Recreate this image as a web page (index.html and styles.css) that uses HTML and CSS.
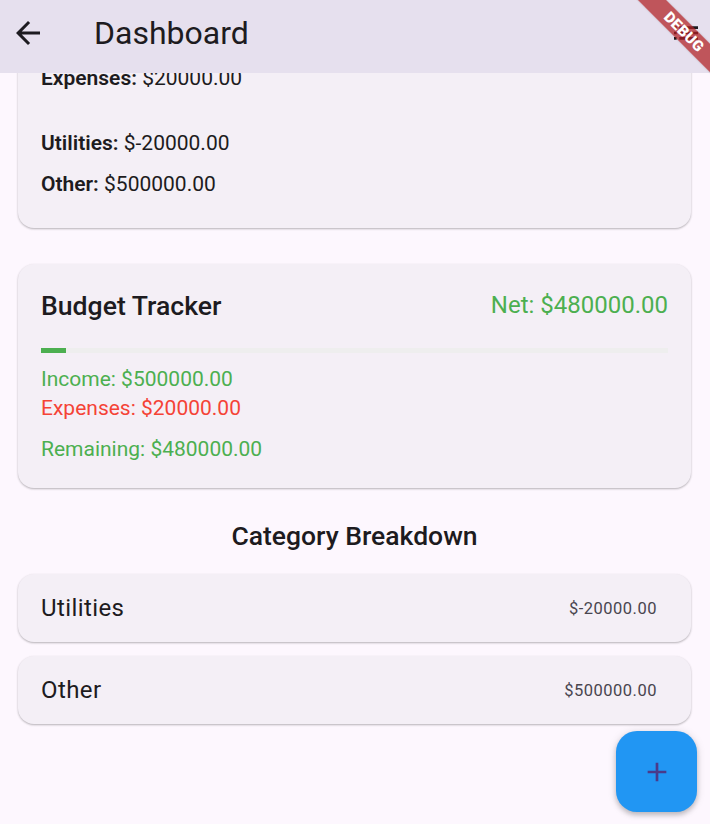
FILE: index.html
```html
<!DOCTYPE html>
<html lang="en">
<head>
<meta charset="utf-8">
<title>Dashboard</title>
<link rel="stylesheet" href="styles.css">
</head>
<body>
<div class="app">
  <header class="appbar">
    <button class="icon-btn back" aria-label="Back">
      <svg viewBox="0 0 24 24" width="36" height="36"><path d="M20 11H7.83l5.59-5.59L12 4l-8 8 8 8 1.41-1.41L7.83 13H20v-2z" fill="#1d1b20"/></svg>
    </button>
    <h1 class="title">Dashboard</h1>
    <button class="icon-btn action" aria-label="List">
      <svg viewBox="0 0 24 24" width="32" height="32"><path d="M3 13h2v-2H3v2zm0 4h2v-2H3v2zm0-8h2V7H3v2zm4 4h14v-2H7v2zm0 4h14v-2H7v2zM7 7v2h14V7H7z" fill="#1d1b20"/></svg>
    </button>
  </header>

  <main class="content">
    <div class="scroll">
      <section class="card summary">
        <p class="row gap-after"><b>Expenses:</b> $20000.00</p>
        <p class="row"><b>Utilities:</b> $-20000.00</p>
        <p class="row"><b>Other:</b> $500000.00</p>
      </section>

      <section class="card budget">
        <div class="budget-head">
          <h2 class="budget-title">Budget Tracker</h2>
          <span class="net">Net: $480000.00</span>
        </div>
        <div class="track"><div class="fill" style="width:4%"></div></div>
        <p class="line green first">Income: $500000.00</p>
        <p class="line red">Expenses: $20000.00</p>
        <p class="line green remaining">Remaining: $480000.00</p>
      </section>

      <h2 class="section-title">Category Breakdown</h2>

      <div class="cat-list">
        <div class="card cat">
          <span class="cat-name">Utilities</span>
          <span class="cat-amt">$-20000.00</span>
        </div>
        <div class="card cat">
          <span class="cat-name">Other</span>
          <span class="cat-amt">$500000.00</span>
        </div>
      </div>
    </div>
  </main>

  <button class="fab" aria-label="Add">
    <svg viewBox="0 0 24 24" width="32" height="32"><path d="M19 13h-6v6h-2v-6H5v-2h6V5h2v6h6v2z" fill="#4a3a8a"/></svg>
  </button>

  <div class="debug-banner"><span>DEBUG</span></div>
</div>
</body>
</html>
```
FILE: styles.css
```css
* { box-sizing: border-box; }
html, body { margin: 0; padding: 0; }
body {
  font-family: Roboto, "Noto Sans", "Liberation Sans", sans-serif;
  background: #fdf7fe;
  color: #1d1b20;
}
.app {
  position: relative;
  width: 710px;
  height: 824px;
  overflow: hidden;
  display: flex;
  flex-direction: column;
}
.appbar {
  position: relative;
  z-index: 2;
  height: 73px;
  flex: none;
  background: #e6e0ee;
  display: flex;
  align-items: center;
  padding-bottom: 7px;
}
.icon-btn {
  border: 0;
  background: none;
  padding: 0;
  display: flex;
  align-items: center;
  justify-content: center;
  width: 40px;
  height: 40px;
}
.back { margin-left: 8px; }
.title {
  margin: 0 0 0 46px;
  font-size: 32px;
  font-weight: 400;
  flex: 1;
  letter-spacing: 0;
  line-height: 40px;
}
.action { margin-right: 4px; }

.content {
  flex: 1;
  overflow: hidden;
  position: relative;
  z-index: 1;
}
.scroll {
  margin-top: -30px;
  padding: 0 19px 0 18px;
  display: flex;
  flex-direction: column;
}
.card {
  background: #f4eff6;
  border-radius: 16px;
  box-shadow: 0 1px 2px rgba(0,0,0,0.22), 0 1px 3px rgba(0,0,0,0.08);
}
.summary {
  padding: 21px 23px 30px;
}
.row {
  margin: 0 0 13px;
  font-size: 21px;
  line-height: 28px;
  height: 28px;
}
.row b { font-weight: 600; }
.row:last-child { margin-bottom: 0; }
.row.gap-after { margin-bottom: 37px; }

.budget {
  margin-top: 36px;
  padding: 21px 23px 24px;
}
.budget-head {
  height: 40px;
  display: flex;
  align-items: center;
  justify-content: space-between;
}
.budget-title {
  margin: 0;
  font-size: 26.6px;
  font-weight: 500;
}
.net {
  font-size: 24px;
  color: #4caf50;
}
.track {
  margin-top: 23px;
  height: 5px;
  background: #eeeeee;
}
.fill {
  height: 100%;
  background: #4caf50;
}
.line {
  margin: 0;
  font-size: 21px;
  line-height: 29px;
}
.line.first { margin-top: 12px; }
.line.remaining { margin-top: 12px; }
.green { color: #4caf50; }
.red { color: #f44336; }

.section-title {
  margin: 31px 0 21px;
  text-align: center;
  font-size: 26.5px;
  font-weight: 500;
  line-height: 34px;
}
.cat-list {
  display: flex;
  flex-direction: column;
  gap: 14px;
}
.cat {
  height: 68px;
  display: flex;
  align-items: center;
  justify-content: space-between;
  padding: 0 34px 0 23px;
}
.cat-name {
  font-size: 24px;
  letter-spacing: 0.4px;
}
.cat-amt {
  font-size: 16.5px;
  color: #49454f;
  letter-spacing: 0.5px;
}

.fab {
  position: absolute;
  right: 13px;
  bottom: 12px;
  width: 81px;
  height: 81px;
  border: 0;
  border-radius: 21px;
  background: #2196f3;
  display: flex;
  align-items: center;
  justify-content: center;
  box-shadow: 0 3px 5px rgba(0,0,0,0.2), 0 1px 10px rgba(0,0,0,0.12);
  z-index: 3;
}

.debug-banner {
  position: absolute;
  top: 22px;
  right: -44px;
  width: 140px;
  height: 20px;
  transform: rotate(45deg);
  background: rgba(176, 30, 34, 0.72);
  box-shadow: 0 0 2px rgba(0,0,0,0.2);
  display: flex;
  align-items: center;
  justify-content: center;
  z-index: 5;
}
.debug-banner span {
  color: #fff;
  font-size: 15px;
  font-weight: 900;
  letter-spacing: 0.3px;
  line-height: 1;
}
```
